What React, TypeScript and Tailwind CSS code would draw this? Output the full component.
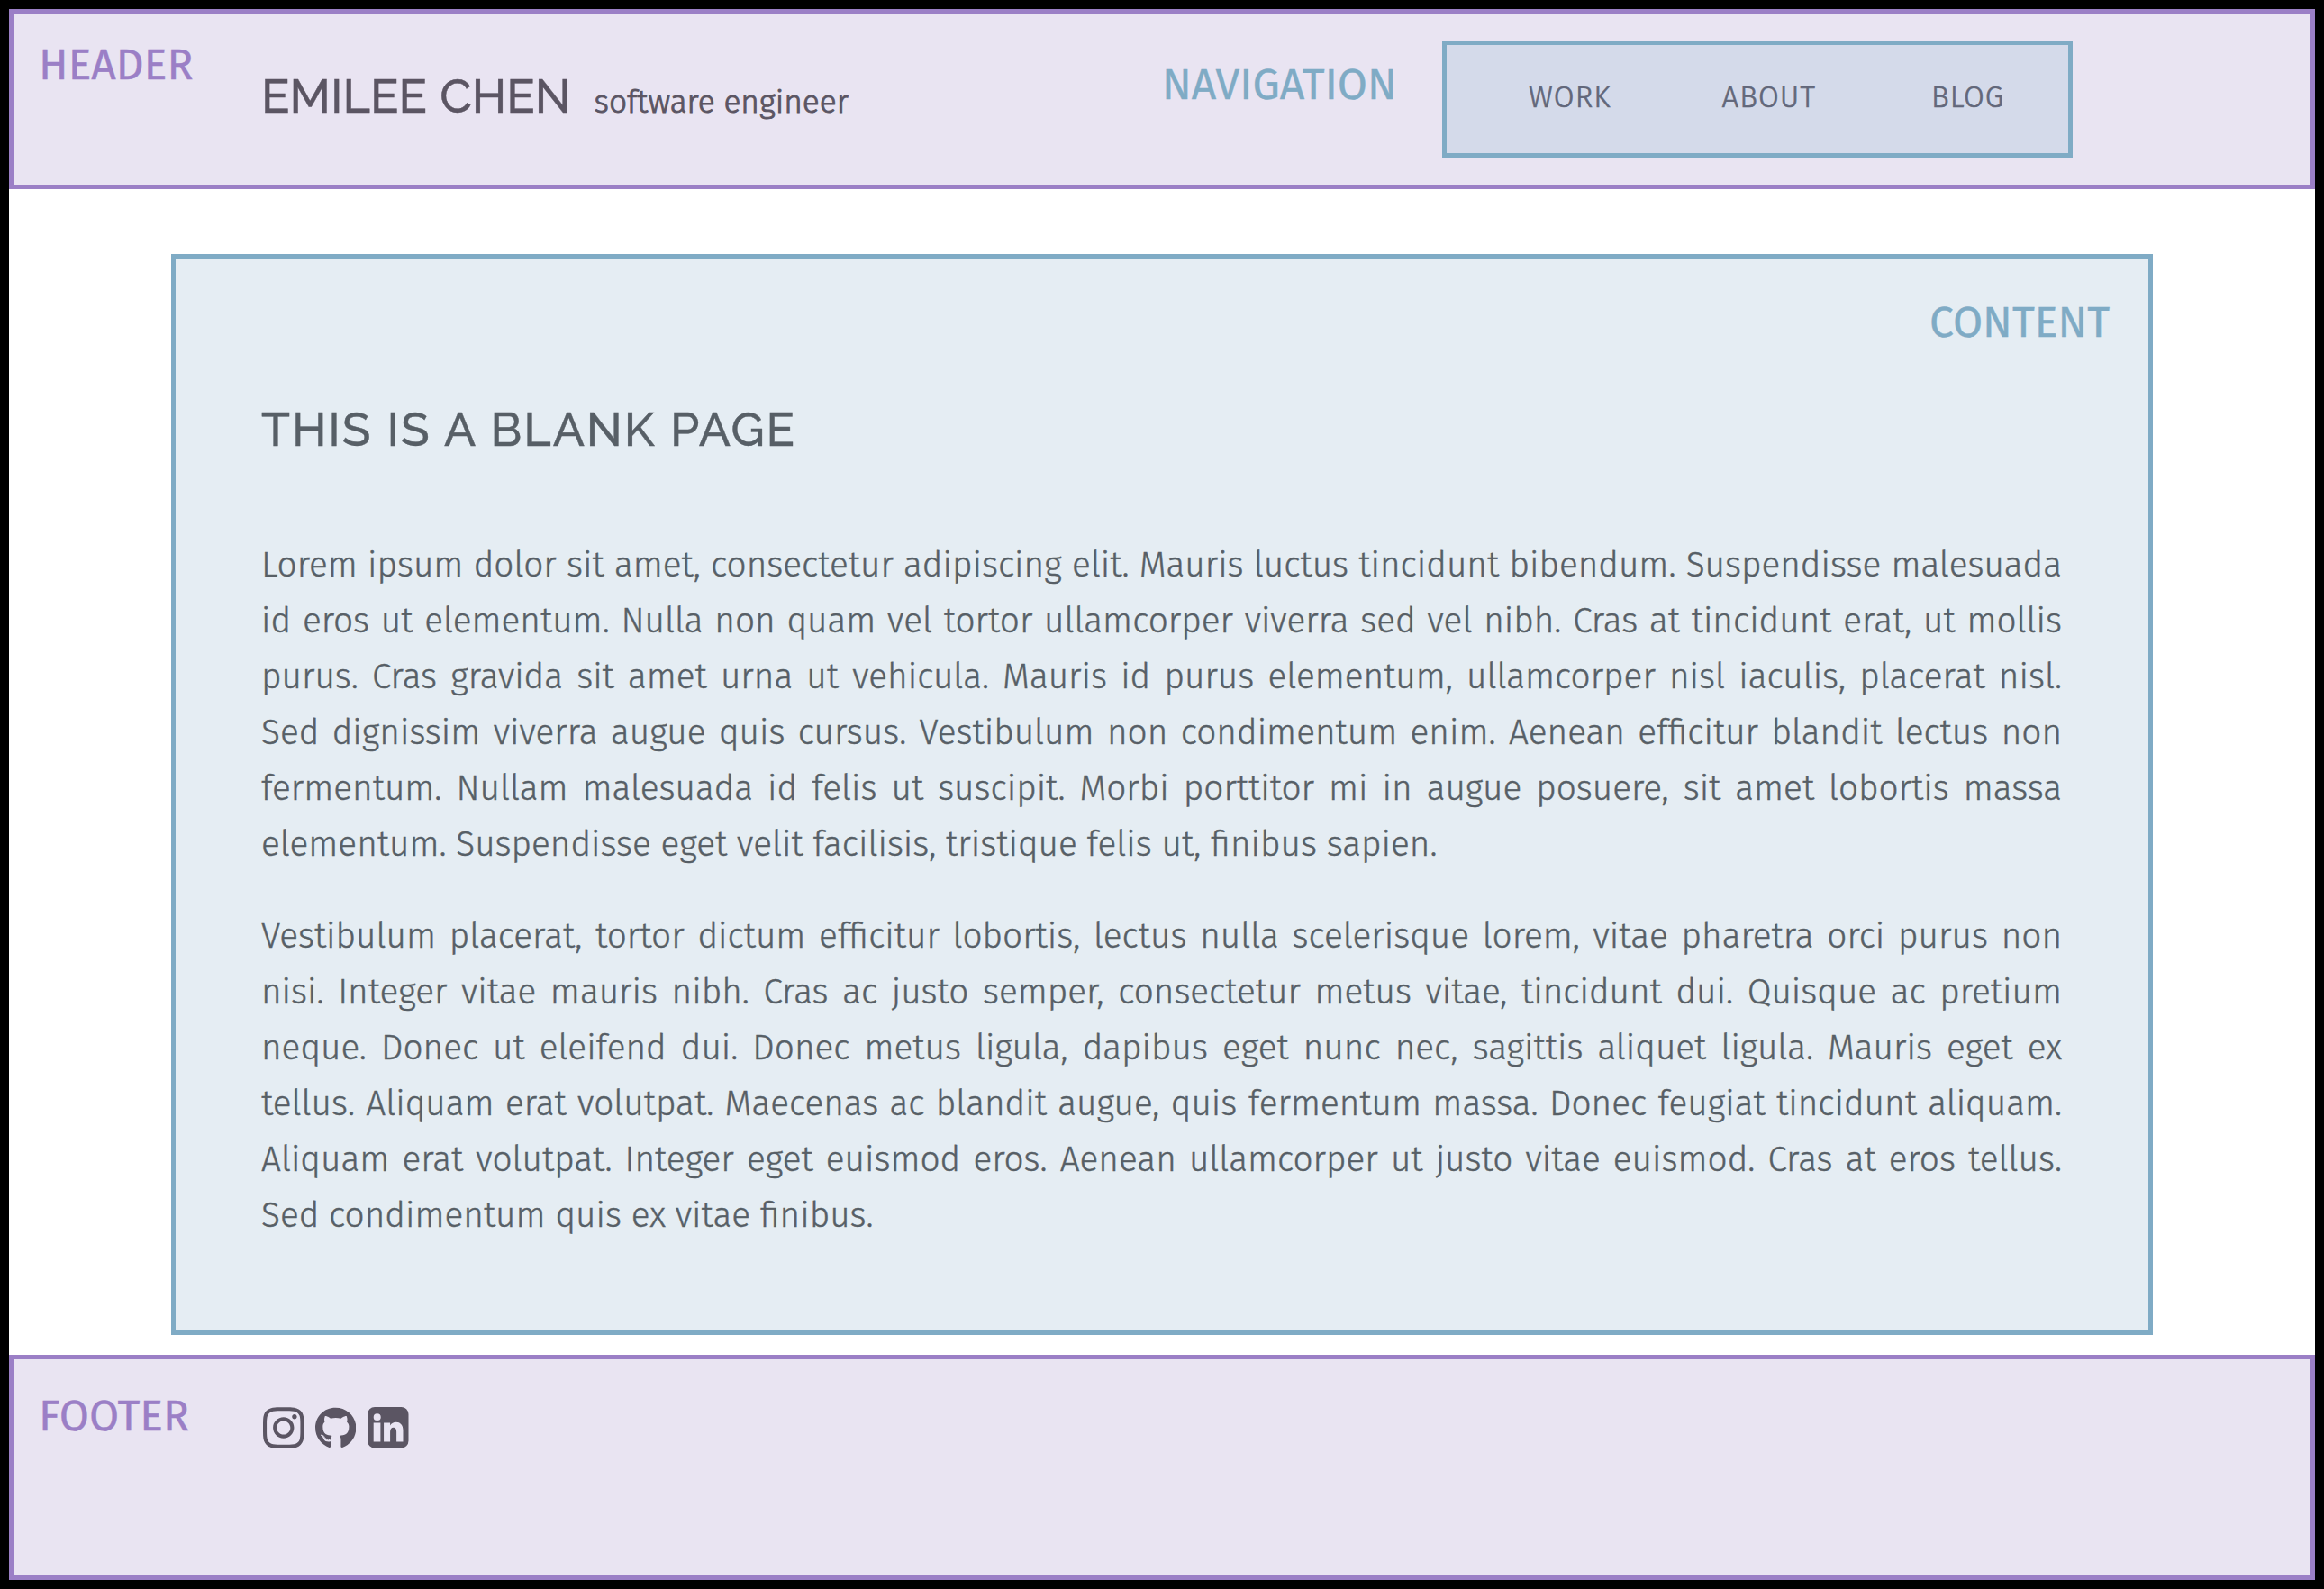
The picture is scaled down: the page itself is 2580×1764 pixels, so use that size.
import type { ReactNode } from 'react';
import { FaGithub, FaInstagram } from 'react-icons/fa';

const paragraphs: string[][] = [
  [
    'Lorem ipsum dolor sit amet, consectetur adipiscing elit. Mauris luctus tincidunt bibendum. Suspendisse malesuada',
    'id eros ut elementum. Nulla non quam vel tortor ullamcorper viverra sed vel nibh. Cras at tincidunt erat, ut mollis',
    'purus. Cras gravida sit amet urna ut vehicula. Mauris id purus elementum, ullamcorper nisl iaculis, placerat nisl.',
    'Sed dignissim viverra augue quis cursus. Vestibulum non condimentum enim. Aenean efficitur blandit lectus non',
    'fermentum. Nullam malesuada id felis ut suscipit. Morbi porttitor mi in augue posuere, sit amet lobortis massa',
    'elementum. Suspendisse eget velit facilisis, tristique felis ut, finibus sapien.',
  ],
  [
    'Vestibulum placerat, tortor dictum efficitur lobortis, lectus nulla scelerisque lorem, vitae pharetra orci purus non',
    'nisi. Integer vitae mauris nibh. Cras ac justo semper, consectetur metus vitae, tincidunt dui. Quisque ac pretium',
    'neque. Donec ut eleifend dui. Donec metus ligula, dapibus eget nunc nec, sagittis aliquet ligula. Mauris eget ex',
    'tellus. Aliquam erat volutpat. Maecenas ac blandit augue, quis fermentum massa. Donec feugiat tincidunt aliquam.',
    'Aliquam erat volutpat. Integer eget euismod eros. Aenean ullamcorper ut justo vitae euismod. Cras at eros tellus.',
    'Sed condimentum quis ex vitae finibus.',
  ],
];

function Label({ className, children }: { className: string; children: ReactNode }) {
  return <div className={`shrink-0 text-[48px] leading-[60px] whitespace-nowrap [-webkit-text-stroke:0.4px] ${className}`}>{children}</div>;
}

function LinkedInIcon() {
  return (
    <svg viewBox="0 0 136 136" className="size-[45.5px]" fill="currentColor" aria-label="LinkedIn">
      <path
        fillRule="evenodd"
        d="M24 0H112A24 24 0 0 1 136 24V112A24 24 0 0 1 112 136H24A24 24 0 0 1 0 112V24A24 24 0 0 1 24 0ZM20 52V115H43V52ZM32 22A12 11.5 0 1 0 32 45A12 11.5 0 1 0 32 22ZM54 52V115H75V82C75 73 79 68 86 68C93 68 96 73 96 82V115H118V78C118 60 109 50 95 50C86 50 80 54 75 61V52Z"
      />
    </svg>
  );
}

export default function App() {
  return (
    <div className="flex h-[1764px] w-[2580px] flex-col bg-black p-[10px] font-['Fira_Sans','Noto_Sans',sans-serif]">
      <header className="flex h-[200px] shrink-0 items-start border-[5px] border-[#9b7fc6] bg-[#e9e4f2] pl-[28px]">
        <Label className="mt-[27px] w-[247px] text-[#9b7fc6]">HEADER</Label>
        <div className="mt-[62px] flex w-[1000px] items-baseline text-[#5b5563]">
          <h1 className="w-[369.5px] font-['Raleway','Lato',sans-serif] text-[52px] leading-[60px] font-medium tracking-[0.05px] [word-spacing:1px] whitespace-nowrap [-webkit-text-stroke:0.4px]">
            EMILEE CHEN
          </h1>
          <span className="text-[35.3px] leading-[44px] font-light [-webkit-text-stroke:1px]">software engineer</span>
        </div>
        <Label className="mt-[49px] w-[311px] text-[#7fabc5]">NAVIGATION</Label>
        <nav className="mt-[30px] flex h-[130px] w-[700px] shrink-0 items-start border-[5px] border-[#7fabc5] bg-[#d4daea] pt-[38px] pl-[91px] text-[33px] leading-[40px] font-light tracking-[1.05px] text-[#62677a] [-webkit-text-stroke:0.7px]">
          <a className="w-[214.5px]">WORK</a>
          <a className="w-[232.5px]">ABOUT</a>
          <a>BLOG</a>
        </nav>
      </header>

      <main className="flex h-[1294px] shrink-0 flex-col bg-white px-[180px] pt-[72px]">
        <section className="h-[1200px] border-[5px] border-[#7fabc5] bg-[#e5edf3] px-[95px] pt-[41px] text-[#575f66]">
          <Label className="-mr-[52px] text-right text-[#7fabc5]">CONTENT</Label>
          <h2 className="mt-[59px] font-['Raleway','Lato',sans-serif] text-[52px] leading-[60px] font-medium tracking-[1.95px] [word-spacing:0.9px] [-webkit-text-stroke:0.4px]">
            THIS IS A BLANK PAGE
          </h2>
          <div className="mt-[89px] flex w-[1999px] flex-col gap-[40px] text-[38.74px] leading-[62px] font-light [-webkit-text-stroke:0.45px]">
            {paragraphs.map((lines, p) => (
              <p key={p}>
                {lines.map((line, i) => (
                  <span
                    key={i}
                    className={
                      i < lines.length - 1
                        ? 'block text-justify whitespace-nowrap [text-align-last:justify]'
                        : 'block whitespace-nowrap'
                    }
                  >
                    {line}
                  </span>
                ))}
              </p>
            ))}
          </div>
        </section>
      </main>

      <footer className="flex h-[250px] shrink-0 items-start border-[5px] border-[#9b7fc6] bg-[#e9e4f2] pl-[28px]">
        <Label className="mt-[33px] w-[249px] text-[#9b7fc6]">FOOTER</Label>
        <div className="mt-[50px] flex h-[52px] items-center gap-[12.6px] text-[#5b5563]">
          <FaInstagram className="h-[52px] w-[45.5px]" />
          <FaGithub className="h-[46.8px] w-[45.4px]" />
          <LinkedInIcon />
        </div>
      </footer>
    </div>
  );
}
